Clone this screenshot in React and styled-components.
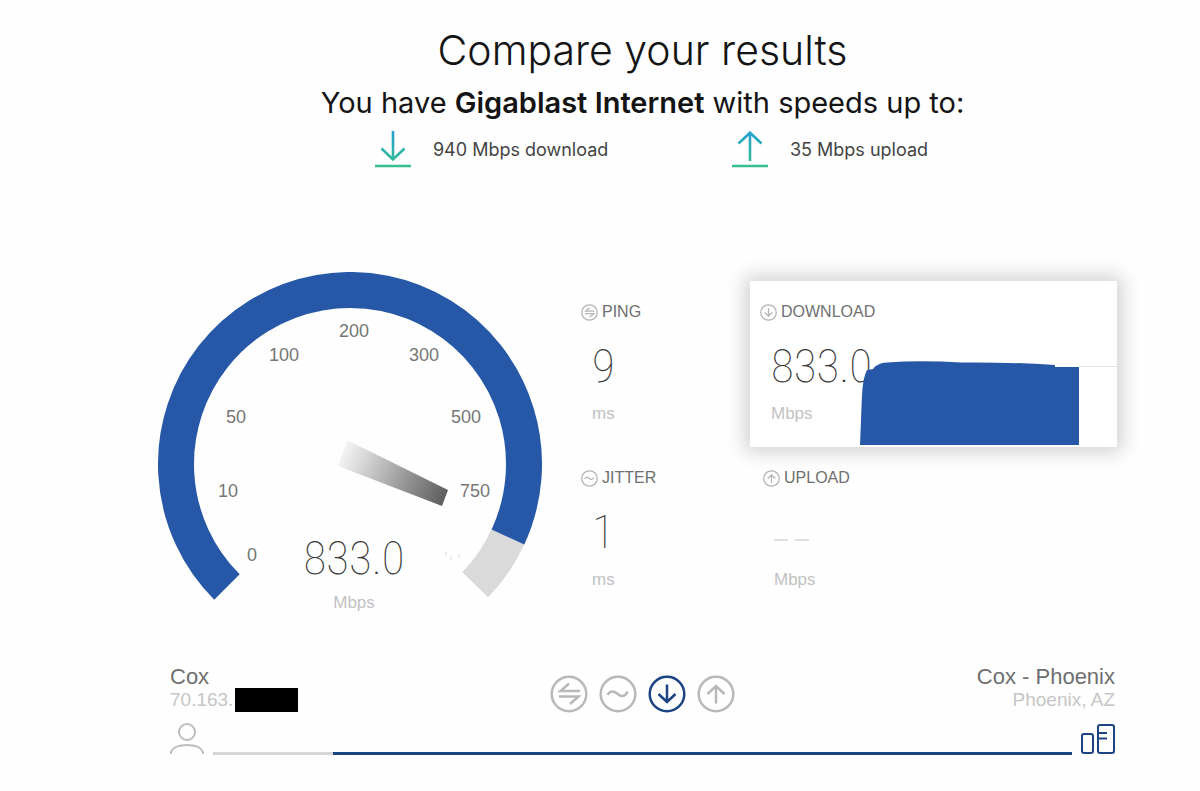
import React from "react";
import styled, { createGlobalStyle } from "styled-components";

const GlobalStyle = createGlobalStyle`
  *, *::before, *::after { box-sizing: border-box; }
  body {
    margin: 0;
    background: #fefefe;
    color: #6f6f6f;
    font-family: "Liberation Sans", Arial, sans-serif;
  }
  h1, h2, p { margin: 0; font-weight: 400; }
`;

const brand = "#2658a7";
const navy = "#1c4482";
const digitFont = `"Roboto Condensed", "Liberation Sans Narrow", Roboto, sans-serif`;

const Page = styled.main`
  padding: 24px 83px 32px 158px;
`;

const Header = styled.header`
  padding-left: 10px;
  color: #141414;
  font-family: Inter, "Open Sans", sans-serif;
  text-align: center;
`;

const Title = styled.h1`
  font-size: 41px;
  font-weight: 300;
  line-height: 52px;
`;

const Plan = styled.p`
  margin-top: 11px;
  font-size: 29px;
  line-height: 32px;

  strong { font-weight: 600; }
`;

const Speeds = styled.ul`
  display: grid;
  grid-template-columns: 357px auto;
  justify-content: center;
  margin: 12px 0 0;
  padding: 0 0 0 18px;
  list-style: none;
`;

const Speed = styled.li`
  display: flex;
  align-items: center;
  gap: 22px;
  color: #444;
  font-size: 18px;
  line-height: 37px;
`;

const Results = styled.section`
  display: flex;
  align-items: flex-start;
  gap: 39px;
  margin-top: 104px;
`;

const GaugeArt = styled.svg`
  display: block;
  flex: none;
  width: 384px;
  height: 345px;
  font-size: 18px;
  text-anchor: middle;
`;

const GaugeValue = styled.text`
  fill: #3a3a3a;
  font-family: ${digitFont};
  font-size: 47px;
  font-weight: 100;
`;

const Stats = styled.div`
  display: grid;
  flex: 1;
  grid-template-columns: 169px 1fr;
  grid-auto-rows: 166px;
  margin-top: 9px;
`;

const Stat = styled.article`
  position: relative;
  padding: 21px 0 0 ${(p) => p.$inset || 0}px;
  background: ${(p) => (p.$active ? "#fff" : "transparent")};
  box-shadow: ${(p) => (p.$active ? "0 0 18px 5px rgba(0, 0, 0, 0.18)" : "none")};
`;

const StatLabel = styled.h2`
  display: flex;
  align-items: center;
  gap: 4px;
  font-size: 16px;
  line-height: 20px;
`;

const StatValue = styled.p`
  height: 60px;
  margin: 14px 0 0 11px;
  color: #3a3a3a;
  font-family: ${digitFont};
  font-size: 47px;
  font-weight: 100;
  line-height: 60px;
`;

const Pending = styled.span`
  display: flex;
  gap: 7px;
  padding-top: 37px;

  &::before, &::after {
    content: "";
    width: 14px;
    height: 2px;
    background: #dedede;
  }
`;

const Unit = styled.p`
  margin: 8px 0 0 11px;
  color: #c2c2c2;
  font-size: 17px;
  line-height: 20px;
`;

const Chart = styled.svg`
  position: absolute;
  right: 0;
  bottom: 2px;
`;

const Footer = styled.footer`
  margin-top: 48px;
  padding: 0 2px 0 12px;
`;

const Endpoints = styled.div`
  display: grid;
  grid-template-columns: 1fr auto 1fr;
`;

const Endpoint = styled.div`
  text-align: ${(p) => (p.$end ? "right" : "left")};
`;

const EndpointName = styled.p`
  font-size: 22px;
  line-height: 24px;
`;

const EndpointDetail = styled.p`
  display: flex;
  align-items: center;
  justify-content: ${(p) => (p.$end ? "flex-end" : "flex-start")};
  gap: 2px;
  height: 22px;
  color: #c6c6c6;
  font-size: 19px;
  line-height: 22px;
`;

const Redacted = styled.span`
  width: 63px;
  height: 24px;
  background: #000;
`;

const Stages = styled.nav`
  display: flex;
  gap: 11px;
  padding-top: 10px;
`;

const StageButton = styled.button`
  width: 38px;
  height: 38px;
  padding: 0;
  border: 0;
  background: none;
  color: ${(p) => (p.$active ? navy : "#b9b9b9")};
`;

const Route = styled.div`
  display: flex;
  align-items: flex-end;
  gap: 9px;
  margin-top: 10px;
`;

const Track = styled.div`
  flex: 1;
  height: 3px;
  background: linear-gradient(to right, #d6d6d8 14%, ${navy} 14%);
`;

const glyphs = {
  ping: "M30 16H10.500L19 8.500M9 21.500H28.500L20 29",
  jitter: "M8.500 20C11 15.500 14.500 15.500 18 18.500C22 22 26 22.500 28.500 16.500",
  download: "M19 9.500V27M10.500 19L19 27L27.500 19",
  upload: "M19 28.500V11M10.500 19L19 11L27.500 19",
};

function StageIcon({ name, size = 38, weight = 2.5 }) {
  return (
    <svg
      width={size}
      height={size}
      viewBox="0 0 38 38"
      fill="none"
      stroke="currentColor"
      strokeWidth={weight}
      display="block"
      aria-hidden="true"
    >
      <circle cx="19" cy="19" r="17.300" />
      <path d={glyphs[name]} />
    </svg>
  );
}

function SpeedIcon({ up }) {
  const id = up ? "speed-up" : "speed-down";
  return (
    <svg width="36" height="37" viewBox="0 0 36 37" fill="none" strokeWidth="2.600" aria-hidden="true">
      <defs>
        <linearGradient id={id} gradientUnits="userSpaceOnUse" x1="0" y1="0" x2="0" y2="36">
          <stop offset="0" stopColor="#25a0d0" />
          <stop offset="1" stopColor="#36c08f" />
        </linearGradient>
      </defs>
      <path
        stroke={`url(#${id})`}
        d={up ? "M18 30V2M6.500 12.500L18 1.700L29.500 12.500M0 35H36" : "M18 0V28M6.500 17.500L18 28.500L29.500 17.500M0 35H36"}
      />
    </svg>
  );
}

const ticks = [
  ["0", -98, 97],
  ["10", -122, 33],
  ["50", -114, -41],
  ["100", -66, -103],
  ["200", 4, -127],
  ["300", 74, -103],
  ["500", 116, -41],
  ["750", 125, 33],
];

const point = (angle, radius = 174) => {
  const rad = (angle * Math.PI) / 180;
  return `${(Math.cos(rad) * radius).toFixed(2)} ${(Math.sin(rad) * radius).toFixed(2)}`;
};

function Gauge() {
  return (
    <GaugeArt viewBox="-192 -192 384 345" role="img" aria-label="Download speed 833.0 Mbps">
      <defs>
        <linearGradient id="needle" gradientUnits="userSpaceOnUse" x1="-12" y1="-13" x2="96" y2="35">
          <stop offset="0" stopColor="#fafafa" />
          <stop offset="0.250" stopColor="#d4d4d4" />
          <stop offset="0.650" stopColor="#929292" />
          <stop offset="1" stopColor="#5c5c5c" />
        </linearGradient>
      </defs>
      <path d={`M${point(24)}A174 174 0 0 1 ${point(44)}`} fill="none" stroke="#dadada" strokeWidth="36" />
      <path d={`M${point(135)}A174 174 0 1 1 ${point(24.8)}`} fill="none" stroke={brand} strokeWidth="36" />
      <path d="M-3 -24L98 26L92 42L-12 2Z" fill="url(#needle)" />
      <path d="M95 90h2M100 94h2M108 92h2" stroke="#ececec" strokeWidth="4" />
      {ticks.map(([label, x, y]) => (
        <text key={label} x={x} y={y} fill="#777">{label}</text>
      ))}
      <GaugeValue x="4" y="110">833.0</GaugeValue>
      <text x="4" y="144" fill="#c2c2c2" fontSize="17">Mbps</text>
    </GaugeArt>
  );
}

const IconTint = styled.span`
  color: #b4b4b4;
`;

function StatCell({ icon, label, value, unit, inset, active, children }) {
  return (
    <Stat $inset={inset} $active={active}>
      <StatLabel>
        <IconTint><StageIcon name={icon} size={17} weight={2.8} /></IconTint>
        {label}
      </StatLabel>
      <StatValue>{value || <Pending aria-label="pending" />}</StatValue>
      <Unit>{unit}</Unit>
      {children}
    </Stat>
  );
}

const stages = [
  ["ping", "Ping"],
  ["jitter", "Jitter"],
  ["download", "Download"],
  ["upload", "Upload"],
];

export default function App() {
  return (
    <>
      <GlobalStyle />
      <Page>
        <Header>
          <Title>Compare your results</Title>
          <Plan>You have <strong>Gigablast Internet</strong> with speeds up to:</Plan>
          <Speeds>
            <Speed><SpeedIcon />940 Mbps download</Speed>
            <Speed><SpeedIcon up />35 Mbps upload</Speed>
          </Speeds>
        </Header>

        <Results>
          <Gauge />
          <Stats>
            <StatCell icon="ping" label="PING" value="9" unit="ms" />
            <StatCell icon="download" label="DOWNLOAD" value="833.0" unit="Mbps" inset={10} active>
              <Chart width="257" height="84" viewBox="0 0 257 84" aria-hidden="true">
                <path d="M219 5.500H257" stroke="#e4e4e4" />
                <path
                  fill={brand}
                  d="M0 84L2 34Q3 16 7 9L13 8Q17 2 27 1.500Q60 -1 101 1.500Q150 1 195 4V6H219V84Z"
                />
              </Chart>
            </StatCell>
            <StatCell icon="jitter" label="JITTER" value="1" unit="ms" />
            <StatCell icon="upload" label="UPLOAD" unit="Mbps" inset={13} />
          </Stats>
        </Results>

        <Footer>
          <Endpoints>
            <Endpoint>
              <EndpointName>Cox</EndpointName>
              <EndpointDetail>70.163.<Redacted /></EndpointDetail>
            </Endpoint>
            <Stages aria-label="Test stages">
              {stages.map(([name, label]) => (
                <StageButton key={name} type="button" aria-label={label} $active={name === "download"}>
                  <StageIcon name={name} />
                </StageButton>
              ))}
            </Stages>
            <Endpoint $end>
              <EndpointName>Cox - Phoenix</EndpointName>
              <EndpointDetail $end>Phoenix, AZ</EndpointDetail>
            </Endpoint>
          </Endpoints>
          <Route>
            <svg width="34" height="32" viewBox="0 0 34 32" fill="none" stroke="#bdbdbd" strokeWidth="2" aria-hidden="true">
              <circle cx="17" cy="9" r="8" />
              <path d="M1 31V29C3 24 8 22 17 22S31 24 33 29V31" />
            </svg>
            <Track />
            <svg width="34" height="32" viewBox="0 0 34 32" fill="none" stroke={navy} strokeWidth="2" aria-hidden="true">
              <rect x="1" y="11" width="11" height="19" rx="2" />
              <rect x="17" y="2" width="16" height="28" rx="2" />
              <path d="M17 10H26M17 15.500H26" />
            </svg>
          </Route>
        </Footer>
      </Page>
    </>
  );
}
